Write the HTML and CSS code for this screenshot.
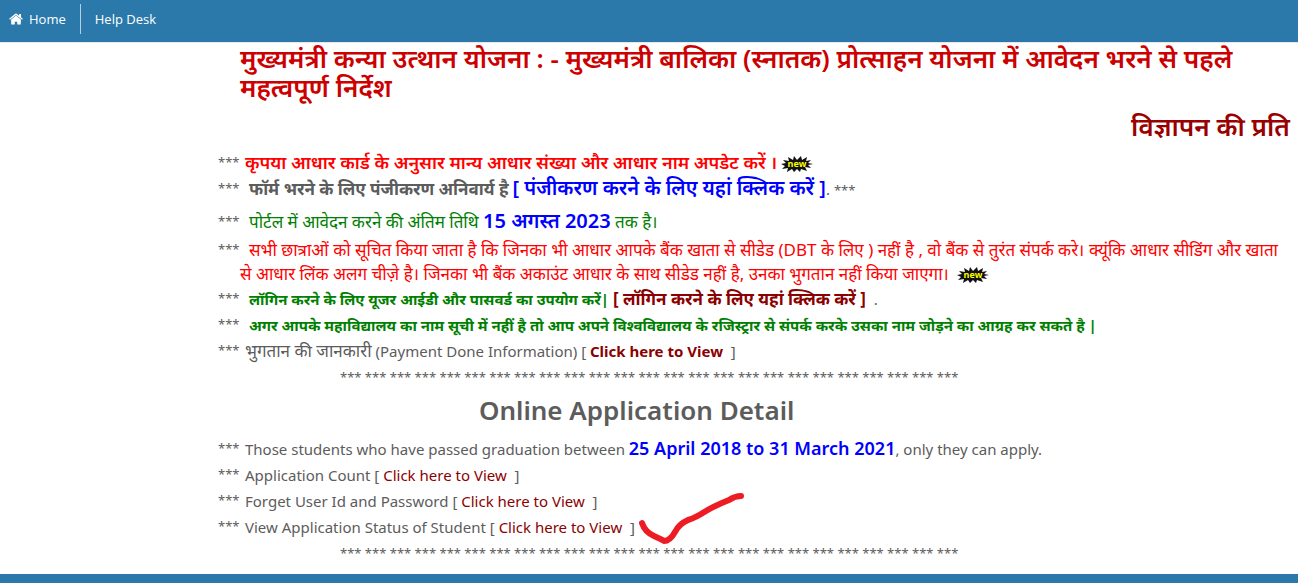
FILE: index.html
```html
<!DOCTYPE html>
<html lang="hi">
<head>
<meta charset="utf-8">
<title>मुख्यमंत्री कन्या उत्थान योजना</title>
<link rel="stylesheet" href="styles.css">
</head>
<body>
<nav class="topbar">
  <a class="nav-link" href="#"><svg class="home-icon" viewBox="0 0 14 12" aria-hidden="true"><path fill="currentColor" d="M7 3.600L2.200 7.500V11q0 .5.5.5h3.100V8.400h2.400v3.100h3.100q.5 0 .5-.5V7.500zM13.800 5.800L12 4.300V1h-1.900v1.700L7.700.7Q7 .2 6.300.7L.2 5.800l.7.900L7 1.900l6.100 4.800z"/><path fill="currentColor" d="M7 2.600l4.800 4v2H2.200v-2z"/></svg>Home</a>
  <a class="nav-link" href="#">Help Desk</a>
</nav>
<main class="content">
  <h1 class="title">मुख्यमंत्री कन्या उत्थान योजना : - मुख्यमंत्री बालिका (स्नातक) प्रोत्साहन योजना में आवेदन भरने से पहले महत्वपूर्ण निर्देश</h1>
  <h2 class="advert"><a href="#">विज्ञापन की प्रति</a></h2>
  <ul class="notes">
    <li class="note"><span class="stars">***</span><b class="red t18">कृपया आधार कार्ड के अनुसार मान्य आधार संख्या और आधार नाम अपडेट करें ।</b> <svg class="badge" viewBox="0 0 32 18"><path fill="#111" d="M0 9l5-1-3-3 6 1-1-4 5 3 1-4 3 4 4-4 1 4 5-3-1 4 5-1-3 3 5 1-5 1 3 3-6-1 2 4-6-2-1 3-3-3-3 3-2-3-5 3 1-4-6 1 3-3z"/><text x="16" y="12" text-anchor="middle" class="badge-text">new</text></svg></li>
    <li class="note"><span class="stars wide">***</span><strong class="t17">फॉर्म भरने के लिए पंजीकरण अनिवार्य है</strong> <a class="blue t20" href="#">[ पंजीकरण करने के लिए यहां क्लिक करें ]</a>. <span class="tail">***</span></li>
    <li class="note tall"><span class="stars wide">***</span><span class="green t17">पोर्टल में आवेदन करने की अंतिम तिथि <b class="blue t20">15 अगस्त 2023</b> तक है।</span></li>
    <li class="note para"><span class="stars wide">***</span><span class="red t17">सभी छात्राओं को सूचित किया जाता है कि जिनका भी आधार आपके बैंक खाता से सीडेड (DBT के लिए ) नहीं है , वो बैंक से तुरंत संपर्क करे। क्यूंकि आधार सीडिंग और खाता से आधार लिंक अलग चीज़े है। जिनका भी बैंक अकाउंट आधार के साथ सीडेड नहीं है, उनका भुगतान नहीं किया जाएगा।</span>&nbsp; <svg class="badge" viewBox="0 0 32 18"><path fill="#111" d="M0 9l5-1-3-3 6 1-1-4 5 3 1-4 3 4 4-4 1 4 5-3-1 4 5-1-3 3 5 1-5 1 3 3-6-1 2 4-6-2-1 3-3-3-3 3-2-3-5 3 1-4-6 1 3-3z"/><text x="16" y="12" text-anchor="middle" class="badge-text">new</text></svg></li>
    <li class="note"><span class="stars wide">***</span><strong class="green t15">लॉगिन करने के लिए यूजर आईडी और पासवर्ड का उपयोग करें|</strong> <a class="maroon t17 strong" href="#">[ लॉगिन करने के लिए यहां क्लिक करें ]</a>&nbsp; .</li>
    <li class="note"><span class="stars wide">***</span><strong class="green t15">अगर आपके महाविद्यालय का नाम सूची में नहीं है तो आप अपने विश्वविद्यालय के रजिस्ट्रार से संपर्क करके उसका नाम जोड़ने का आग्रह कर सकते है |</strong></li>
    <li class="note"><span class="stars">***</span><span class="t17">भुगतान की जानकारी</span> (Payment Done Information) [ <a class="maroon strong" href="#">Click here to View</a>&nbsp; ]</li>
  </ul>
  <p class="divider">*** *** *** *** *** *** *** *** *** *** *** *** *** *** *** *** *** *** *** *** *** *** *** *** ***</p>
  <h2 class="subtitle">Online Application Detail</h2>
  <ul class="notes" lang="en">
    <li class="note"><span class="stars">***</span>Those students who have passed graduation between <b class="blue t18">25 April 2018 to 31 March 2021</b>, only they can apply.</li>
    <li class="note"><span class="stars">***</span>Application Count [ <a class="maroon" href="#">Click here to View</a>&nbsp; ]</li>
    <li class="note"><span class="stars">***</span>Forget User Id and Password [ <a class="maroon" href="#">Click here to View</a>&nbsp; ]</li>
    <li class="note"><span class="stars">***</span>View Application Status of Student [ <a class="maroon" href="#">Click here to View</a>&nbsp; <span class="marked">]<svg class="tick" viewBox="0 0 106 54" aria-hidden="true"><path d="M4 31Q7 40 16 44T26 49Q32 49 37 40Q41 32 50 28Q57 26 68 19Q76 14 91 8Q97 4 103 4"/></svg></span></li>
  </ul>
  <p class="divider">*** *** *** *** *** *** *** *** *** *** *** *** *** *** *** *** *** *** *** *** *** *** *** *** ***</p>
</main>
<footer class="footer"></footer>
</body>
</html>
```
FILE: styles.css
```css
* { box-sizing: border-box; }
html { height: 100%; }
body {
  display: flex;
  flex-direction: column;
  min-height: 100%;
  margin: 0;
  background: #fff;
  color: #5c5c5c;
  font-family: "Noto Sans", sans-serif;
  font-size: 15px;
}
a { color: inherit; text-decoration: none; }
b { font-weight: 600; }
.topbar {
  display: flex;
  align-items: center;
  height: 43px;
  padding-bottom: 4px;
  background: #2b79aa;
  border-bottom: 1px solid #e7e7e7;
  color: #fff;
  font-family: "Open Sans", sans-serif;
  font-size: 13px;
}
.nav-link {
  display: flex;
  align-items: center;
  height: 30px;
  padding: 0 14px;
}
.nav-link:first-child { padding-left: 9px; border-right: 1px solid #b5cfe0; }
.home-icon { width: 14px; height: 12px; margin-right: 6px; }
.content { padding: 1px 8px 8px 240px; }
.title {
  margin: 0;
  color: #c00;
  font-size: 26px;
  font-weight: 600;
  line-height: 29px;
}
.advert {
  margin: 8px 0;
  color: #900;
  font-size: 26px;
  font-weight: 600;
  line-height: 32px;
  text-align: right;
}
.notes { margin: 0; padding: 0; list-style: none; }
.note { line-height: 26px; text-indent: -22px; }
.note.tall { padding-top: 4px; line-height: 32px; }
.note.para { line-height: 24px; }
.note > * { text-indent: 0; }
.note b, .note strong, .note a, .note .t17, .tail { line-height: 1; }
.stars {
  display: inline-block;
  width: 27px;
  font-size: 13px;
  line-height: 1;
  vertical-align: 2px;
}
.stars.wide { width: 31px; }
.tail { font-size: 13px; }
.t15 { font-size: 15px; }
.t17 { font-size: 17px; }
.t18 { font-size: 18px; }
.t20 { font-size: 20px; }
a.blue { font-weight: 600; }
.strong, strong { font-weight: bold; }
.red { color: #f00; }
.green { color: #008000; }
.blue { color: #00f; }
.maroon { color: #8b0000; }
.badge { width: 32px; height: 18px; vertical-align: -4px; }
.badge-text { fill: #ff0; font: bold 9px "Open Sans", sans-serif; }
.divider {
  margin: 0 0 0 100px;
  font-size: 13px;
  line-height: 26px;
}
.subtitle {
  margin: 4px 0 10px 239px;
  font-size: 26px;
  font-weight: 600;
  line-height: 32px;
}
.marked { position: relative; }
.tick {
  position: absolute;
  left: 8px;
  bottom: -9px;
  width: 106px;
  height: 54px;
}
.tick path {
  fill: none;
  stroke: #ed1c24;
  stroke-width: 6;
  stroke-linecap: round;
  stroke-linejoin: round;
}
.footer { flex: 1; min-height: 8px; background: #2b79aa; }
```
